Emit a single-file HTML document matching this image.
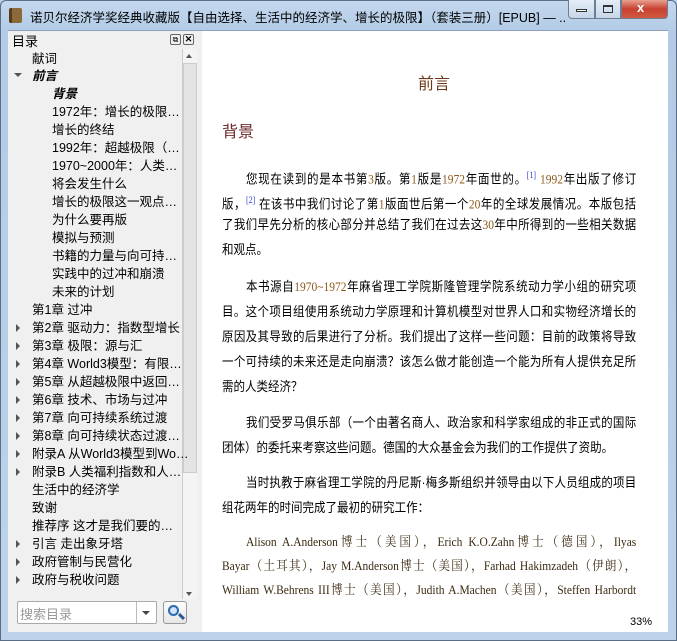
<!DOCTYPE html>
<html><head><meta charset="utf-8"><style>
*{margin:0;padding:0;box-sizing:border-box}
body{width:677px;height:641px;overflow:hidden;background:#b9d1ea;font-family:"Liberation Sans","Noto Sans CJK SC",sans-serif;position:relative}
.frame{position:absolute;left:0;top:0;width:677px;height:641px;background:linear-gradient(#c4d8ee,#b3cbe6 30px,#bcd3eb);border:1px solid #5a6e86;border-radius:6px 6px 0 0}
.title{position:absolute;left:30px;top:7px;font-size:12.5px;color:#000;white-space:nowrap;width:535px;overflow:hidden}
.icon{position:absolute;left:9px;top:8px;width:13px;height:15px;background:#8a6a3a;border-radius:2px;border-left:3px solid #5a3a1a}
.tb{position:absolute;top:0;height:19px;border:1px solid #6d7e93;border-top:none;background:linear-gradient(#e4edf7,#c7d6e9)}
.panel{position:absolute;left:8px;top:30px;width:194px;height:602px;background:#f0f0f0;border-top:1px solid #8ea1b8}
.content{position:absolute;left:202px;top:30px;width:466px;height:602px;background:#fff;border-top:1px solid #8ea1b8}
.toc div{position:absolute;font-size:12.5px;white-space:nowrap;color:#000;height:18px;line-height:18px}
.ar{position:absolute;width:0;height:0}
.ar.r{border-left:4px solid #555;border-top:4px solid transparent;border-bottom:4px solid transparent}
.ar.d{border-top:4px solid #555;border-left:4px solid transparent;border-right:4px solid transparent}
.ln{position:absolute;left:222px;width:468px;font-size:13px;text-align:justify;text-align-last:justify;white-space:nowrap;height:20px;line-height:20px;color:#000;transform:scaleX(.885);transform-origin:0 0}
.ln.i{left:246px;width:441px}
.n{font-family:"Liberation Serif",serif;color:#8b5a1a}
sup{color:#3040d0;font-size:9px;font-family:"Liberation Serif",serif}
.en{font-family:"Liberation Serif","Noto Serif CJK SC",serif;color:#3a2a10}
</style></head><body>
<div class="frame"></div>
<div class="icon"></div>
<div class="title">诺贝尔经济学奖经典收藏版【自由选择、生活中的经济学、增长的极限】（套装三册）[EPUB] — ...</div>
<div class="tb" style="left:568px;width:27px;border-radius:0 0 0 4px"></div>
<div style="position:absolute;left:576px;top:9px;width:11px;height:3px;border:1px solid #333;background:#fff"></div>
<div class="tb" style="left:595px;width:26px"></div>
<div style="position:absolute;left:603px;top:5px;width:10px;height:8px;border:1px solid #333;border-top-width:2px"></div>
<div class="tb" style="left:621px;width:47px;background:linear-gradient(#e8a090,#c84030 50%,#d05a40);border-radius:0 0 4px 0"></div>
<div style="position:absolute;left:637px;top:0px;font-size:13px;font-weight:bold;color:#fff">x</div>
<div class="panel">
 <div style="position:absolute;left:4px;top:0px;font-size:13px">目录</div>
 <div style="position:absolute;left:162px;top:3px;width:11px;height:11px;border:1px solid #666;border-radius:2px;font-size:8px;line-height:9px;text-align:center">⧉</div>
 <div style="position:absolute;left:175px;top:3px;width:11px;height:11px;border:1px solid #666;border-radius:2px;font-size:9px;line-height:9px;text-align:center;font-weight:bold">✕</div>
 <div style="position:absolute;left:174px;top:18px;width:15px;height:550px;background:#f4f4f4;border-left:1px solid #ccc"></div>
 <div style="position:absolute;left:175px;top:32px;width:14px;height:410px;background:#e4e4e4;border:1px solid #ccc"></div>
 <div class="ar" style="left:178px;top:23px;border-bottom:4px solid #555;border-left:3.5px solid transparent;border-right:3.5px solid transparent"></div>
 <div class="ar" style="left:178px;top:561px;border-top:4px solid #555;border-left:3.5px solid transparent;border-right:3.5px solid transparent"></div>
 <div style="position:absolute;left:9px;top:570px;width:140px;height:23px;background:#fff;border:1px solid #aaa;border-radius:2px;font-size:13px;color:#999;padding:2px 2px">搜索目录</div>
 <div style="position:absolute;left:128px;top:571px;width:1px;height:21px;background:#bbb"></div>
 <div class="ar d" style="left:134px;top:580px;border-top-color:#444"></div>
 <div style="position:absolute;left:155px;top:570px;width:24px;height:23px;background:linear-gradient(#fdfdfd,#e6e6e6);border:1px solid #999;border-radius:3px"></div>
 <div style="position:absolute;left:160px;top:574px;width:11px;height:11px;border:2px solid #2a6ab0;border-radius:50%;background:#cfe4f8"></div>
 <div style="position:absolute;left:170px;top:584px;width:7px;height:3px;background:#2a5a90;transform:rotate(45deg)"></div>
</div>
<div class="toc">
<div style="left:32px;top:50px">献词</div>
<div class="ar d" style="left:14px;top:73px"></div>
<div style="left:32px;top:67px;font-weight:bold;font-style:italic">前言</div>
<div style="left:52px;top:85px;font-weight:bold;font-style:italic">背景</div>
<div style="left:52px;top:103px">1972年：增长的极限…</div>
<div style="left:52px;top:121px">增长的终结</div>
<div style="left:52px;top:139px">1992年：超越极限（…</div>
<div style="left:52px;top:157px">1970~2000年：人类…</div>
<div style="left:52px;top:175px">将会发生什么</div>
<div style="left:52px;top:193px">增长的极限这一观点…</div>
<div style="left:52px;top:211px">为什么要再版</div>
<div style="left:52px;top:229px">模拟与预测</div>
<div style="left:52px;top:247px">书籍的力量与向可持…</div>
<div style="left:52px;top:265px">实践中的过冲和崩溃</div>
<div style="left:52px;top:283px">未来的计划</div>
<div style="left:32px;top:301px">第1章 过冲</div>
<div style="left:32px;top:319px">第2章 驱动力：指数型增长</div>
<div style="left:32px;top:337px">第3章 极限：源与汇</div>
<div style="left:32px;top:355px">第4章 World3模型：有限…</div>
<div style="left:32px;top:373px">第5章 从超越极限中返回…</div>
<div style="left:32px;top:391px">第6章 技术、市场与过冲</div>
<div style="left:32px;top:409px">第7章 向可持续系统过渡</div>
<div style="left:32px;top:427px">第8章 向可持续状态过渡…</div>
<div style="left:32px;top:445px">附录A 从World3模型到Wo…</div>
<div style="left:32px;top:463px">附录B 人类福利指数和人…</div>
<div style="left:32px;top:481px">生活中的经济学</div>
<div style="left:32px;top:499px">致谢</div>
<div style="left:32px;top:517px">推荐序 这才是我们要的…</div>
<div style="left:32px;top:535px">引言 走出象牙塔</div>
<div style="left:32px;top:553px">政府管制与民营化</div>
<div style="left:32px;top:571px">政府与税收问题</div>
</div>
<div id="arrows"></div>
<div class="content"></div>
<div style="position:absolute;left:418px;top:70px;font-size:16px;color:#6b3a1a">前言</div>
<div style="position:absolute;left:222px;top:118px;font-size:16px;color:#6b2a2a">背景</div>
<div class="ln i" style="top:165px">您现在读到的是本书第<span class="n">3</span>版。第<span class="n">1</span>版是<span class="n">1972</span>年面世的。<sup>[1]</sup> <span class="n">1992</span>年出版了修订</div>
<div class="ln" style="top:190px">版，<sup>[2]</sup> 在该书中我们讨论了第<span class="n">1</span>版面世后第一个<span class="n">20</span>年的全球发展情况。本版包括</div>
<div class="ln" style="top:215px">了我们早先分析的核心部分并总结了我们在过去这<span class="n">30</span>年中所得到的一些相关数据</div>
<div class="ln" style="top:240px;text-align-last:left">和观点。</div>
<div class="ln i" style="top:277px">本书源自<span class="n">1970~1972</span>年麻省理工学院斯隆管理学院系统动力学小组的研究项</div>
<div class="ln" style="top:302px">目。这个项目组使用系统动力学原理和计算机模型对世界人口和实物经济增长的</div>
<div class="ln" style="top:327px">原因及其导致的后果进行了分析。我们提出了这样一些问题：目前的政策将导致</div>
<div class="ln" style="top:352px">一个可持续的未来还是走向崩溃？该怎么做才能创造一个能为所有人提供充足所</div>
<div class="ln" style="top:377px;text-align-last:left">需的人类经济？</div>
<div class="ln i" style="top:413px">我们受罗马俱乐部（一个由著名商人、政治家和科学家组成的非正式的国际</div>
<div class="ln" style="top:438px;text-align-last:left">团体）的委托来考察这些问题。德国的大众基金会为我们的工作提供了资助。</div>
<div class="ln i" style="top:473px">当时执教于麻省理工学院的丹尼斯·梅多斯组织并领导由以下人员组成的项目</div>
<div class="ln" style="top:498px;text-align-last:left">组花两年的时间完成了最初的研究工作：</div>
<div class="ln i en" style="top:532px">Alison A.Anderson博士（美国），Erich K.O.Zahn博士（德国），Ilyas</div>
<div class="ln en" style="top:556px">Bayar（土耳其），Jay M.Anderson博士（美国），Farhad Hakimzadeh（伊朗），</div>
<div class="ln en" style="top:580px">William W.Behrens III博士（美国），Judith A.Machen（美国），Steffen Harbordt</div>
<div style="position:absolute;left:630px;top:616px;font-size:11px">33%</div>
<script>
var ys=[319,337,355,373,391,409,427,445,463,535,553,571],h='';
ys.forEach(function(y){h+='<div class="ar r" style="left:16px;top:'+(y+5)+'px"></div>'});
document.getElementById('arrows').innerHTML=h;
</script>
</body></html>
